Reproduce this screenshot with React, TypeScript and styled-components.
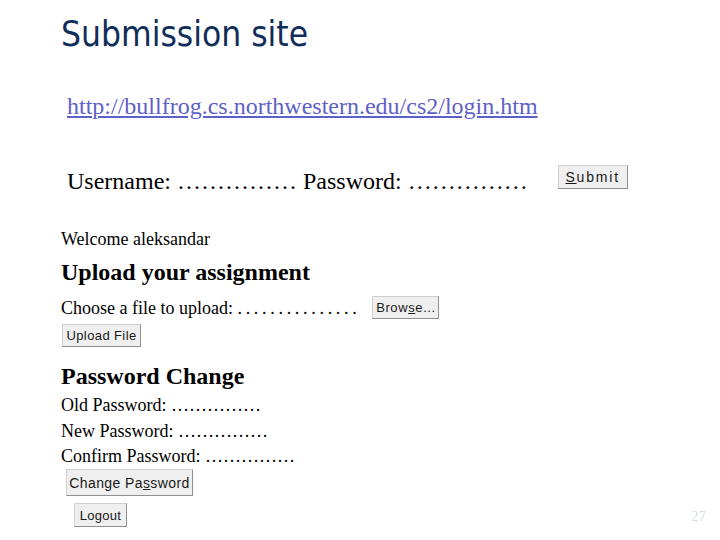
import React from "react";
import styled, { createGlobalStyle } from "styled-components";

const Global = createGlobalStyle`
  html, body { margin: 0; padding: 0; background: #ffffff; }
`;

const Slide = styled.div`
  width: 720px;
  height: 540px;
  box-sizing: border-box;
  display: flex;
  flex-direction: column;
  align-items: flex-start;
  padding: 14px 14px 0 61px;
  font-family: "Liberation Serif", "Times New Roman", serif;
  color: #000;
  overflow: hidden;
`;

const Title = styled.h1`
  margin: 0;
  font-family: "DejaVu Sans Condensed", "DejaVu Sans", Verdana, sans-serif;
  font-weight: normal;
  font-size: 35px;
  line-height: 40px;
  color: #112d5a;
`;

const Link = styled.a`
  margin: 38px 0 0 6px;
  font-size: 24px;
  line-height: 28px;
  color: #5f5fc8;
  text-decoration: underline;
`;

const LoginRow = styled.div`
  display: flex;
  align-items: flex-start;
  gap: 30px;
  margin: 39px 0 0 6px;
`;

const BigText = styled.span`
  margin-top: 8px;
  font-size: 24px;
  line-height: 28px;
  white-space: pre;
`;

const Text = styled.div<{ $lh?: number; $mt?: number }>`
  margin-top: ${(p) => p.$mt ?? 0}px;
  font-size: 18px;
  line-height: ${(p) => p.$lh ?? 22}px;
  white-space: pre;
`;

const Heading = styled.h2<{ $mt: number }>`
  margin: ${(p) => p.$mt}px 0 0 0;
  font-size: 24px;
  line-height: 28px;
  font-weight: bold;
`;

const FileRow = styled.div`
  display: flex;
  align-items: flex-start;
  gap: 12px;
  margin-top: 10px;
`;

const SpacedDots = styled.span`
  letter-spacing: 3.7px;
`;

const Button = styled.button<{ $h: number; $w: number; $fs?: number; $ls?: number; $mt?: number; $ml?: number }>`
  box-sizing: border-box;
  height: ${(p) => p.$h}px;
  width: ${(p) => p.$w}px;
  margin: ${(p) => p.$mt ?? 0}px 0 0 ${(p) => p.$ml ?? 0}px;
  padding: 0;
  font-family: "Liberation Sans", Arial, sans-serif;
  font-size: ${(p) => p.$fs ?? 13}px;
  letter-spacing: ${(p) => p.$ls ?? 0.5}px;
  color: #1a1a1a;
  background: #efefef;
  border: 1px solid;
  border-color: #cfcfcf #8e8e8e #8e8e8e #cfcfcf;
  border-radius: 0;
  display: flex;
  align-items: center;
  justify-content: center;
  white-space: pre;
`;

const PasswordBlock = styled.div`
  display: flex;
  flex-direction: column;
  margin-top: 2px;
`;

const FooterRow = styled.div`
  align-self: stretch;
  display: flex;
  justify-content: space-between;
  align-items: flex-end;
  margin-top: 7px;
`;

const PageNum = styled.span`
  font-family: "Liberation Serif", serif;
  font-size: 15px;
  line-height: 16px;
  color: #d6dfe9;
  margin-bottom: 3px;
`;

export default function App() {
  const dots = "\u2026\u2026\u2026\u2026\u2026";
  return (
    <>
      <Global />
      <Slide>
        <Title>Submission site</Title>
        <Link href="#">http://bullfrog.cs.northwestern.edu/cs2/login.htm</Link>
        <LoginRow>
          <BigText>{`Username: ${dots} Password: ${dots}`}</BigText>
          <Button $h={24} $w={70} $fs={14} $ls={1.8} $mt={6}>
            <u>S</u>ubmit
          </Button>
        </LoginRow>
        <Text $mt={33}>Welcome aleksandar</Text>
        <Heading $mt={8}>Upload your assignment</Heading>
        <FileRow>
          <Text $mt={1}>
            Choose a file to upload: <SpacedDots>...............</SpacedDots>
          </Text>
          <Button $h={23} $w={67} $fs={13} $ls={0.6}>
            Brow<u>s</u>e...
          </Button>
        </FileRow>
        <Button $h={23} $w={79} $fs={13} $ls={0.4} $mt={5} $ml={1}>
          Upload File
        </Button>
        <Heading $mt={15}>Password Change</Heading>
        <PasswordBlock>
          <Text $lh={26}>{`Old Password: ${dots}`}</Text>
          <Text $lh={26}>{`New Password: ${dots}`}</Text>
          <Text $lh={24}>{`Confirm Password: ${dots}`}</Text>
        </PasswordBlock>
        <Button $h={27} $w={127} $fs={14} $ls={0.4} $mt={1} $ml={5}>
          Change Pa<u>s</u>sword
        </Button>
        <FooterRow>
          <Button $h={24} $w={53} $fs={13} $ls={0.3} $ml={13}>
            Logout
          </Button>
          <PageNum>27</PageNum>
        </FooterRow>
      </Slide>
    </>
  );
}
